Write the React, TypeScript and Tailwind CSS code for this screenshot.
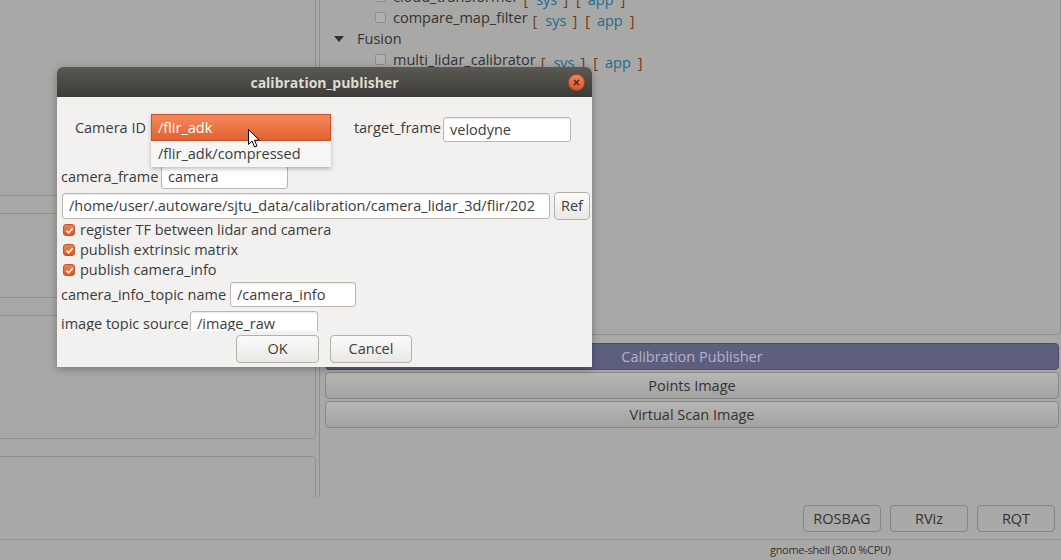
import React from 'react';

function Links() {
  return (
    <span className="ml-[5px] inline-flex translate-y-[3px] items-center">
      <span className="text-[#6a3a1c]">[</span>
      <span className="ml-[8px] text-[#1f6a8e]">sys</span>
      <span className="ml-[6px] text-[#6a3a1c]">]</span>
      <span className="ml-[8px] text-[#6a3a1c]">[</span>
      <span className="ml-[7px] text-[#1f6a8e]">app</span>
      <span className="ml-[7px] text-[#6a3a1c]">]</span>
    </span>
  );
}

function TreeItem({ label }: { label: string }) {
  return (
    <div className="flex h-[21px] items-center pl-[55px]">
      <span className="h-[11px] w-[11px] rounded-[2px] border border-[#8c8c8a] bg-[#b0b0ae]" />
      <span className="ml-[7px]">{label}</span>
      <Links />
    </div>
  );
}

function Field({ value, className }: { value: string; className: string }) {
  return (
    <div
      className={`flex items-center rounded-[3px] border border-[#bab7b1] bg-white px-[6px] shadow-[inset_0_1px_1px_rgba(0,0,0,0.08)] ${className}`}
    >
      <span className="whitespace-nowrap">{value}</span>
    </div>
  );
}

function CheckRow({ label }: { label: string }) {
  return (
    <div className="flex h-[20px] items-center pl-[6px]">
      <span className="flex h-[12px] w-[12px] items-center justify-center rounded-[3px] border border-[#c4532a] bg-linear-to-b from-[#f08252] to-[#dc5a2b]">
        <svg width="9" height="9" viewBox="0 0 9 9">
          <path d="M1.5 4.6 L3.6 6.7 L7.6 2.2" fill="none" stroke="white" strokeWidth="1.7" />
        </svg>
      </span>
      <span className="ml-[5px]">{label}</span>
    </div>
  );
}

function DlgButton({ label, className }: { label: string; className: string }) {
  return (
    <div
      className={`flex h-[28px] items-center justify-center rounded-[4px] border border-[#b3b0aa] bg-linear-to-b from-[#fbfbfa] to-[#e9e8e6] ${className}`}
    >
      {label}
    </div>
  );
}

function PanelButton({ label, active }: { label: string; active?: boolean }) {
  return (
    <div
      className={
        active
          ? 'flex h-[27px] items-center justify-center rounded-[4px] border border-[#4c4c6a] bg-[#5e5e7f] text-[#b3b3c6]'
          : 'flex h-[27px] items-center justify-center rounded-[4px] border border-[#878785] bg-linear-to-b from-[#b6b6b4] to-[#a2a2a0] text-[#333]'
      }
    >
      {label}
    </div>
  );
}

function Cursor() {
  return (
    <svg width="13" height="20" viewBox="0 0 13 20" className="absolute left-[97px] top-[15px]">
      <path
        d="M0.5 0.5 L0.5 15.5 L4 12 L6.6 18 L9 17 L6.5 11.2 L11.3 11.2 Z"
        fill="white"
        stroke="black"
        strokeWidth="1"
        strokeLinejoin="round"
      />
    </svg>
  );
}

export default function App() {
  return (
    <div className="relative h-[560px] w-[1061px] overflow-hidden bg-[#a8a8a6] font-['Open_Sans',sans-serif] text-[14.5px] text-[#333]">
      {/* main window body */}
      <div className="flex h-[497px] overflow-hidden">
        {/* left pane */}
        <div className="mt-[-4px] flex w-[316px] flex-col gap-[17px]">
          <div className="ml-[-8px] h-[200px] shrink-0 rounded-[4px] border border-[#8f8f8d]" />
          <div className="ml-[-8px] h-[85px] shrink-0 rounded-[4px] border border-[#8f8f8d]" />
          <div className="ml-[-8px] h-[124px] shrink-0 rounded-[4px] border border-[#8f8f8d]" />
          <div className="ml-[-8px] h-[120px] shrink-0 rounded-[4px] border border-[#8f8f8d]" />
        </div>
        <div className="w-[3px]" />
        {/* right pane */}
        <div className="flex flex-1 flex-col border-l border-[#8f8f8d]">
          <div className="h-[335px] shrink-0 overflow-hidden rounded-br-[4px] border-r border-b border-[#8f8f8d]">
            <div className="mt-[-14px]">
              <TreeItem label="cloud_transformer" />
              <TreeItem label="compare_map_filter" />
              <div className="flex h-[21px] items-center pl-[13px]">
                <svg width="12" height="8" viewBox="0 0 12 8">
                  <path d="M1 1 L11 1 L6 7 Z" fill="#333" />
                </svg>
                <span className="ml-[12px]">Fusion</span>
              </div>
              <TreeItem label="multi_lidar_calibrator" />
            </div>
          </div>
          <div className="flex flex-col gap-[2px] pt-[8px] pr-[2px] pl-[5px]">
            <PanelButton label="Calibration Publisher" active />
            <PanelButton label="Points Image" />
            <PanelButton label="Virtual Scan Image" />
          </div>
        </div>
      </div>

      {/* bottom buttons */}
      <div className="flex h-[42px] items-center justify-end gap-[9px] pr-[6px] pt-[1px]">
        {['ROSBAG', 'RViz', 'RQT'].map((b) => (
          <div
            key={b}
            className="flex h-[27px] w-[78px] items-center justify-center rounded-[4px] border border-[#858583] bg-[#a9a9a7] text-[#333]"
          >
            {b}
          </div>
        ))}
      </div>

      {/* status bar */}
      <div className="flex h-[21px] items-center border-t border-[#939391] pl-[770px] text-[11px] tracking-[-0.3px] text-[#333]">
        gnome-shell (30.0 %CPU)
      </div>

      {/* dialog */}
      <div className="absolute left-[57px] top-[67px] flex h-[300px] w-[535px] flex-col overflow-hidden rounded-t-[6px] bg-[#f2f1f0] text-[#3c3c3c] shadow-[0_2px_8px_rgba(0,0,0,0.3)]">
        <div className="grid h-[30px] shrink-0 grid-cols-[1fr_auto_1fr] items-center bg-linear-to-b from-[#5b5953] to-[#3c3b37]">
          <span />
          <span className="text-[14px] font-bold text-[#dfdbd2]">calibration_publisher</span>
          <span className="flex justify-end pr-[7px]">
            <span className="flex h-[17px] w-[17px] items-center justify-center rounded-full border border-[#b8461f] bg-linear-to-b from-[#f3845a] to-[#d9532a]">
              <svg width="7" height="7" viewBox="0 0 7 7">
                <path d="M1 1 L6 6 M6 1 L1 6" stroke="#3c2a22" strokeWidth="1.4" />
              </svg>
            </span>
          </span>
        </div>

        <div className="h-[234px] shrink-0 overflow-hidden">
          {/* camera id row */}
          <div className="mt-[17px] flex h-[27px] items-start">
            <span className="w-[89px] self-center text-right">Camera ID</span>
            <div className="relative ml-[5px] h-[27px] w-[180px] shrink-0">
              <div className="absolute left-0 top-0 z-10 w-full bg-[#f6f6f5] shadow-[0_2px_4px_rgba(0,0,0,0.25)]">
                <div className="flex h-[27px] items-center border border-[#c3522a] bg-linear-to-b from-[#f4895c] to-[#e0612f] pl-[6px] text-white">
                  /flir_adk
                </div>
                <div className="flex h-[26px] items-center pl-[7px]">/flir_adk/compressed</div>
                <Cursor />
              </div>
            </div>
            <span className="ml-[20px] w-[92px] self-center pr-[2px] text-right">target_frame</span>
            <Field value="velodyne" className="mt-[3px] h-[25px] w-[128px]" />
          </div>

          {/* camera frame */}
          <div className="mt-[24px] flex h-[24px] items-center">
            <span className="w-[104px] pl-[4px]">camera_frame</span>
            <Field value="camera" className="h-[24px] w-[127px]" />
          </div>

          {/* path */}
          <div className="mt-[4px] flex h-[26px] items-center gap-[4px] pl-[5px]">
            <Field
              value="/home/user/.autoware/sjtu_data/calibration/camera_lidar_3d/flir/202"
              className="h-[26px] w-[488px] overflow-hidden"
            />
            <DlgButton label="Ref" className="h-[26px] w-[36px]" />
          </div>

          <div className="mt-[1px]">
            <CheckRow label="register TF between lidar and camera" />
            <CheckRow label="publish extrinsic matrix" />
            <CheckRow label="publish camera_info" />
          </div>

          <div className="mt-[2px] flex h-[25px] items-center">
            <span className="w-[173px] pl-[4px]">camera_info_topic name</span>
            <Field value="/camera_info" className="h-[25px] w-[126px]" />
          </div>

          <div className="mt-[4px] flex h-[25px] items-center">
            <span className="w-[133px] pl-[4px]">image topic source</span>
            <Field value="/image_raw" className="h-[25px] w-[128px]" />
          </div>
        </div>

        <div className="flex gap-[11px] pl-[179px] pt-[4px]">
          <DlgButton label="OK" className="w-[83px]" />
          <DlgButton label="Cancel" className="w-[82px]" />
        </div>
      </div>
    </div>
  );
}
